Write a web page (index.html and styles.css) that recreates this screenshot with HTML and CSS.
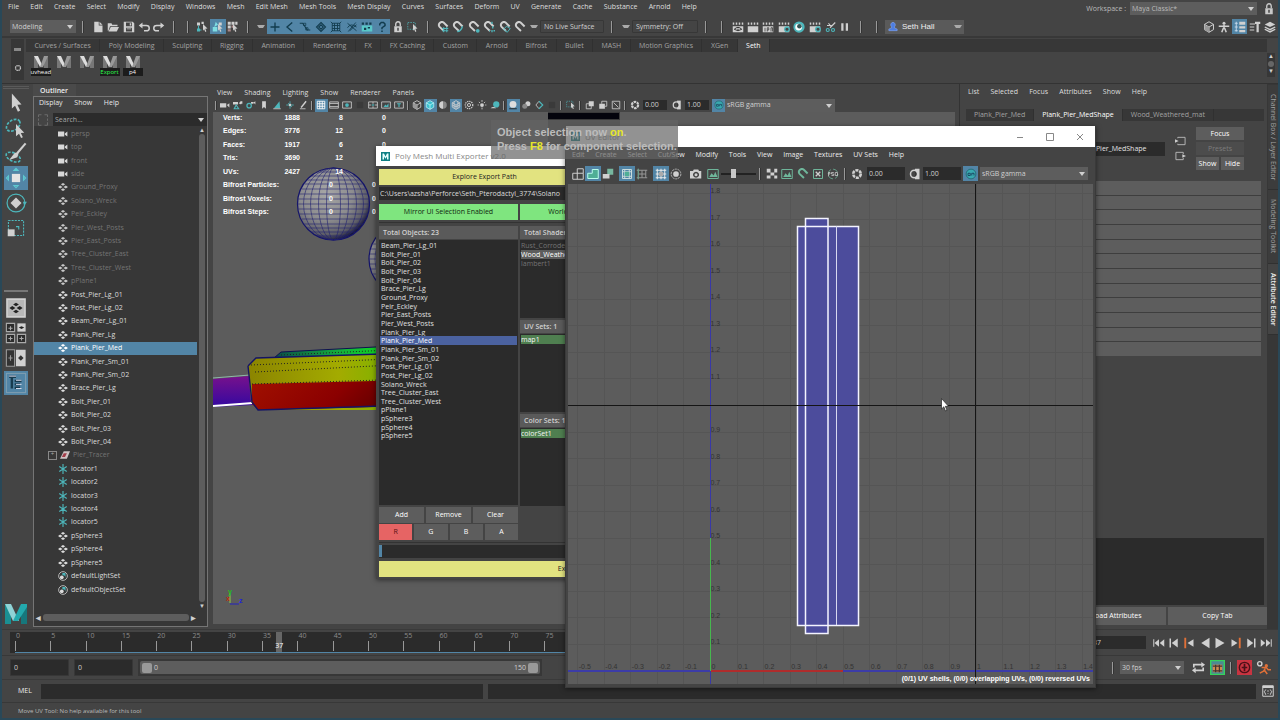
FILE: index.html
```html
<!DOCTYPE html>
<html lang="en">
<head>
    <meta charset="UTF-8">
    <meta name="viewport" content="width=device-width, initial-scale=1.0">
    <title>Maya</title>
    <link rel="stylesheet" href="styles.css">
</head>

<body>
    <div class="app">
        <header class="topbar">
            <nav class="menu main-menu" data-menu="File,Edit,Create,Select,Modify,Display,Windows,Mesh,Edit Mesh,Mesh Tools,Mesh Display,Curves,Surfaces,Deform,UV,Generate,Cache,Substance,Arnold,Help"></nav>
            <div class="workspace">
                <label for="workspace">Workspace :</label>
                <span class="drop"><select id="workspace"><option>Maya Classic*</option></select></span>
                <div class="tools" data-icons="lock"></div>
            </div>
        </header>

        <div class="status">
            <span class="grip"></span>
            <span class="drop mode"><select aria-label="Menu set"><option>Modeling</option></select></span>
            <span class="sep"></span>
            <div class="tools tools-5" data-icons="new open save undo redo"></div>
            <span class="sep"></span>
            <span class="sep"></span>
            <div class="tools tools-3" data-icons="hier object* comp"></div>
            <span class="sep"></span>
            <span class="tri"></span>
            <div class="tools tools-8" data-icons="plus* angle* curve* diamond* lattice* fx* clap* quest*"></div>
            <div class="tools tools-2" data-icons="lock marquee"></div>
            <span class="sep"></span>
            <div class="tools tools-6" data-icons="maggrid magcurve magpoint magcenter magplane magnet"></div>
            <span class="tri"></span>
            <input class="field live" aria-label="Live surface" value="No Live Surface">
            <div class="status-right">
                <span class="sep"></span>
                <span class="tri"></span>
                <input class="field sym" aria-label="Symmetry" value="Symmetry: Off">
                <span class="sep"></span>
                <span class="sep"></span>
                <div class="tools tools-8" data-icons="clapeye clapper clapipr clapset ball clapset cut pause"></div>
                <span class="sep"></span>
                <span class="sep"></span>
                <button class="user"><svg viewBox="0 0 12 12"><path d="M6 1a3 3 0 0 1 2 5v2l3 1v2H1V9l3-1V6a3 3 0 0 1 2-5z" fill="#4d7de0" stroke="#8eb0ff" stroke-width=".6"/></svg>Seth Hall<span class="tri"></span></button>
            </div>
            <div class="tools tools-5 panels" data-icons="cube man channel* hammer layers"></div>
        </div>

        <div class="shelf">
            <span class="grip"></span>
            <div class="shelf-side"><i></i><svg viewBox="0 0 16 16"><circle cx="8" cy="8" r="5" fill="none" stroke="#c4c4c4" stroke-width="2.5" stroke-dasharray="3 .9"/></svg></div>
            <div class="shelf-main">
                <div class="shelf-tabs" id="shelf-tabs"></div>
                <div class="shelf-items" id="shelf-items"></div>
            </div>
            <div class="shelf-scroll"><b>▲</b><i></i><b>▼</b></div>
        </div>

        <main class="main">
            <aside class="toolbox">
                <div class="handle"></div>
                <div class="tools big" data-icons="arrow lasso paint move* rotate scale"></div>
                <hr>
                <div class="tools big" data-icons="single four two tree*"></div>
                <svg class="logo" viewBox="0 0 22 20"><path d="M0 0h6v20H0z" fill="#1a8f93"/><path d="M16 0h6v20h-6z" fill="#16777c"/><path d="M0 0h6l8 17H8z" fill="#8fd3d6"/><path d="M22 0h-6L8 17h5l9-14z" fill="#23a9ad"/></svg>
            </aside>

            <section class="outliner">
                <h2 class="out-tab">Outliner</h2>
                <div class="out-box">
                    <nav class="menu out-menu" data-menu="Display,Show,Help"></nav>
                    <div class="out-search">
                        <svg viewBox="0 0 16 16"><path d="M2 4V1h4M10 1h4v3M14 11v4h-4M6 15H2v-4M2 6v3M14 6v3" fill="none" stroke="#777"/></svg>
                        <span class="drop"><input type="text" aria-label="Search outliner" placeholder="Search..."></span>
                    </div>
                    <div class="out-body">
                        <ul id="outliner"></ul>
                        <div class="vscroll"><b>▲</b><i></i><b>▼</b></div>
                    </div>
                    <div class="hscroll"><b>◀</b><i></i><b>▶</b></div>
                </div>
            </section>

            <section class="viewport">
                <nav class="menu view-menu" data-menu="View,Shading,Lighting,Show,Renderer,Panels"></nav>
                <div class="view-tools">
                    <span class="sep"></span>
                    <div class="tools tools-7" data-icons="cam camlock camset bookmark leaf pan pencil"></div>
                    <span class="sep"></span>
                    <div class="tools tools-7" data-icons="grid* film gate dim safe region text"></div>
                    <span class="sep"></span>
                    <div class="tools tools-7" data-icons="cube cubeteal* half cubewire* checker light shadow"></div>
                    <span class="sep"></span>
                    <div class="tools tools-4" data-icons="ao* blur aa dim"></div>
                    <span class="sep"></span>
                    <div class="tools" data-icons="marquee"></div>
                    <span class="sep"></span>
                    <div class="tools tools-3" data-icons="copy copy2 nobox"></div>
                    <span class="sep"></span>
                    <div class="tools" data-icons="iris"></div>
                    <input class="num" aria-label="Exposure" value="0.00">
                    <div class="tools" data-icons="contrast"></div>
                    <input class="num" aria-label="Gamma" value="1.00">
                    <div class="tools" data-icons="cm*"></div>
                    <span class="drop gamma"><select aria-label="View transform"><option>sRGB gamma</option></select></span>
                </div>
                <div class="scene">
                    <svg class="scene-art" viewBox="0 0 742 511" preserveAspectRatio="xMinYMin slice">
                        <defs>
                            <radialGradient id="ball" cx=".4" cy=".35" r=".68"><stop offset="0" stop-color="#a6a6a6"/><stop offset=".55" stop-color="#8c8c8e"/><stop offset=".85" stop-color="#5c5c66"/><stop offset="1" stop-color="#0c0c35"/></radialGradient>
                            <linearGradient id="top" x1="0" x2="1"><stop offset="0" stop-color="#8b8400"/><stop offset=".55" stop-color="#a3ab00"/><stop offset="1" stop-color="#6bb600"/></linearGradient>
                            <linearGradient id="front" x1="0" x2="1" y2=".2"><stop offset="0" stop-color="#a01000"/><stop offset=".6" stop-color="#8b0000"/><stop offset="1" stop-color="#5c0000"/></linearGradient>
                            <linearGradient id="far" x1="0" x2="1"><stop offset="0" stop-color="#0a4a4a"/><stop offset=".5" stop-color="#14b43c"/><stop offset="1" stop-color="#0af00a"/></linearGradient>
                            <linearGradient id="side" x1="0" x2="0" y2="1"><stop offset="0" stop-color="#77118c"/><stop offset="1" stop-color="#3408a0"/></linearGradient>
                            <g id="sphere">
                                <circle r="36" fill="url(#ball)" stroke="#14146a" stroke-width="1.2"/>
                                <g fill="none" stroke="#22226e" stroke-width=".6">
                                    <ellipse rx="7" ry="36"/><ellipse rx="15" ry="36"/><ellipse rx="23" ry="36"/><ellipse rx="30" ry="36"/>
                                    <path d="M-17 -32H17M-22 -28H22M-26 -24H26M-29 -20H29M-32 -15H32M-34 -10H34M-35 -5H35M-36 0H36M-35 5H35M-34 10H34M-32 15H32M-30 20H30M-27 24H27M-22 28H22M-16 32H16"/>
                                </g>
                            </g>
                        </defs>
                        <path d="M335 0h72v36h-72z" fill="#3a3a3a"/>
                        <path d="M335 1h71v6h-71z" fill="#04040c"/>
                        <use href="#sphere" x="120.500" y="92"/>
                        <use href="#sphere" x="192" y="147"/>
                        <path d="M0 267l36-3 4 29-40 2z" fill="url(#side)"/>
                        <path d="M0 266l37-3" stroke="#8fb8a8"/><path d="M0 294l40-3" stroke="#fff" stroke-width="2"/>
                        <path d="M61 246l7-6 132-7v18l-140 4z" fill="url(#far)" stroke="#101050"/>
                        <path d="M35 254l8-8 157-5v57l-155 0-7-8z" fill="url(#top)"/>
                        <path d="M39 272l161-4v26l-155 4-6-6z" fill="url(#front)"/>
                        <path d="M35 254l8-8 157-5M35 254l4 36 6 8 155-5" fill="none" stroke="#141464" stroke-width="1.400"/>
                        <path d="M38 253l162-7M42 260l158-8M39 272l161-5M68 243l132-6" fill="none" stroke="#222" stroke-dasharray="1 2"/>
                        <path d="M17 491v-10" stroke="#8ad040"/><path d="M17 492h9" stroke="#2222c0"/>
                        <text x="15" y="482" fill="#20c020" class="axis">y</text><text x="26" y="491" fill="#2222e0" class="axis">z</text><text x="13" y="489" fill="#c03010" class="axis">x</text>
                    </svg>
                    <div class="hud">
                        <div><b>Verts:</b><b>1888</b><b>8</b><b>0</b></div>
                        <div><b>Edges:</b><b>3776</b><b>12</b><b>0</b></div>
                        <div><b>Faces:</b><b>1917</b><b>6</b><b>0</b></div>
                        <div><b>Tris:</b><b>3690</b><b>12</b><b>0</b></div>
                        <div><b>UVs:</b><b>2427</b><b>14</b><b>0</b></div>
                        <div class="bifrost"><b>Bifrost Particles:</b><b>0</b><b>0</b></div>
                        <div class="bifrost"><b>Bifrost Voxels:</b><b>0</b><b>0</b></div>
                        <div class="bifrost"><b>Bifrost Steps:</b><b>0</b><b>0</b></div>
                    </div>
                </div>
            </section>

            <section class="attrs">
                <nav class="menu attr-menu" data-menu="List,Selected,Focus,Attributes,Show,Help"></nav>
                <div class="attr-tabs">
                    <button>Plank_Pier_Med</button>
                    <button class="on">Plank_Pier_MedShape</button>
                    <button>Wood_Weathered_mat</button>
                </div>
                <div class="attr-head">
                    <label for="mesh-name">mesh:</label>
                    <input id="mesh-name" value="Plank_Pier_MedShape">
                    <div class="attr-io">
                        <svg viewBox="0 0 12 10"><path d="M3 2V1h8v8H3V8" fill="none" stroke="#bbb"/><path d="M0 3l4 2-4 2z" fill="#ccc"/></svg>
                        <svg viewBox="0 0 12 10"><path d="M9 3V1H1v8h8V7" fill="none" stroke="#bbb"/><path d="M8 3l4 2-4 2z" fill="#ccc"/></svg>
                    </div>
                    <div class="attr-btns">
                        <button class="wide">Focus</button>
                        <button class="wide" disabled>Presets</button>
                        <button>Show</button>
                        <button>Hide</button>
                    </div>
                </div>
                <div class="rolls" id="rolls"></div>
                <textarea class="notes" aria-label="Notes"></textarea>
                <div class="attr-foot">
                    <button>Select</button>
                    <button>Load Attributes</button>
                    <button>Copy Tab</button>
                </div>
            </section>

            <nav class="side-tabs">
                <button>Channel Box / Layer Editor</button>
                <button>Modeling Toolkit</button>
                <button class="on">Attribute Editor</button>
            </nav>
        </main>

        <div class="timeline">
            <span class="grip"></span>
            <div class="time-bed">
                <div class="ticks" id="ticks"></div>
            </div>
            <input class="frame" aria-label="Current frame" value="37">
            <div class="tools tools-8p" data-icons="first prev keyprev back play keynext next last"></div>
        </div>

        <div class="range">
            <span class="grip"></span>
            <input class="field" aria-label="Animation start" value="0">
            <input class="field" aria-label="Playback start" value="0">
            <div class="range-bed">
                <div class="range-bar"><i></i><span>0</span><span class="end">150</span><i></i></div>
            </div>
            <span class="grow"></span>
            <span class="sep"></span>
            <span class="drop fps"><select aria-label="Frame rate"><option>30 fps</option></select></span>
            <div class="range-tools">
                <div class="tools" data-icons="loop"></div>
                <div class="tools" data-icons="cache"></div>
                <span class="sep"></span>
                <div class="tools" data-icons="autokey"></div>
                <div class="tools" data-icons="runner"></div>
            </div>
        </div>

        <div class="command">
            <span class="grip"></span>
            <label for="mel">MEL</label>
            <input class="mel" id="mel">
            <output class="result"></output>
            <div class="tools" data-icons="script"></div>
        </div>
        <footer class="help"><span class="grip"></span>Move UV Tool: No help available for this tool</footer>
    </div>

    <section class="exporter">
        <header class="exp-title">
            <svg viewBox="0 0 12 12"><path d="M0 0h12v12H0z" fill="#0e7f84"/><path d="M2 10V2h2l2 4 2-4h2v8H8V6L6 9 4 6v4z" fill="#e8ffff"/></svg>
            Poly Mesh Multi Exporter v2.0
        </header>
        <div class="exp-body">
            <button class="yellow explore">Explore Export Path</button>
            <input class="path" aria-label="Export path" value="C:\Users\azsha\Perforce\Seth_Pterodactyl_3774\Solano">
            <div class="exp-modes">
                <button>Mirror UI Selection Enabled</button>
                <button>World Origin</button>
            </div>
            <div class="exp-cols">
                <div class="exp-left">
                    <h3>Total Objects: 23</h3>
                    <div class="list tall"><ul id="objects"></ul></div>
                    <div class="row"><button>Add</button><button>Remove</button><button>Clear</button></div>
                    <div class="row"><button class="red">R</button><button>G</button><button>B</button><button>A</button></div>
                </div>
                <div class="exp-right">
                    <h3>Total Shaders: 3</h3>
                    <div class="list"><p class="dim">Rust_Corroded</p><p class="shade">Wood_Weathered_mat</p><p class="dim">lambert1</p></div>
                    <h3>UV Sets: 1</h3>
                    <div class="list"><p class="set">map1</p></div>
                    <h3>Color Sets: 1</h3>
                    <div class="list"><p class="set">colorSet1</p></div>
                </div>
            </div>
            <div class="progress"><i></i></div>
            <button class="yellow">Export</button>
        </div>
    </section>

    <section class="uv">
        <header class="uv-title">
            <span class="uv-name"><svg viewBox="0 0 12 12"><path d="M0 0h12v12H0z" fill="#0e7f84"/><path d="M2 10V2h2l2 4 2-4h2v8H8V6L6 9 4 6v4z" fill="#e8ffff"/></svg>UV Editor</span>
            <button aria-label="Minimize"><svg viewBox="0 0 8 8"><path d="M1 4.500h6"/></svg></button>
            <button aria-label="Maximize"><svg viewBox="0 0 8 8"><path d="M.5 .5h7v7h-7z"/></svg></button>
            <button aria-label="Close"><svg viewBox="0 0 8 8"><path d="M1 1l6 6M7 1L1 7"/></svg></button>
        </header>
        <nav class="menu uv-menu" data-menu="Edit,Create,Select,Cut/Sew,Modify,Tools,View,Image,Textures,UV Sets,Help"></nav>
        <div class="uv-tools">
            <div class="tools tools-3" data-icons="uvgrid uvshell* uvsolid"></div>
            <div class="tools tools-2" data-icons="uvborder* uvcross"></div>
            <div class="tools tools-2" data-icons="pix* isolate"></div>
            <div class="tools photo" data-icons="camera picture"></div>
            <input type="range" class="dimmer" aria-label="Image dim" min="0" max="100" value="32">
            <span class="sep"></span>
            <div class="tools tools-5" data-icons="checks picture maguv xbox psd"></div>
            <span class="sep"></span>
            <div class="tools" data-icons="iris"></div>
            <input class="num" aria-label="UV exposure" value="0.00">
            <div class="tools" data-icons="contrast"></div>
            <input class="num" aria-label="UV gamma" value="1.00">
            <div class="tools" data-icons="cm*"></div>
            <span class="drop gamma"><select aria-label="UV view transform"><option>sRGB gamma</option></select></span>
        </div>
        <svg class="uv-canvas" id="uv-canvas" viewBox="0 0 525 500"></svg>
    </section>

    <div class="toast">Object selection now <b>on</b>.<br>Press <b>F8</b> for component selection.</div>

    <svg class="cursor" viewBox="0 0 8 14"><path d="M.5 .5v10.500l2.300-2.200 1.700 4.200 1.500-.7-1.700-4h3.200z" fill="#fff" stroke="#222" stroke-width=".7"/></svg>

    <script>
        const T = '#4db6bb'
        const clap = '<path d="M1 7h14v8H1z"/><path d="M1 2h2v3H1zM5 2h2v3H5zM9 2h2v3H9zM13 2h2v3h-2z"/>'
        const magShape = color => `<path d="M10 13L3.500 8.500A4 4 0 0 1 8 2l6 4.500" transform="rotate(8 8 8)" fill="none" stroke="${color}" stroke-width="2.600"/>`
        const mag = magShape('currentColor')
        const pick = '<path d="M8 4l6 6-3 .3 1.500 3.500-1.500.7L9.500 11 8 13z"/>'
        const cubeLine = '<path d="M8 1l6 3.500v7L8 15l-6-3.500v-7zM2 4.500L8 8l6-3.500M8 8v7" fill="none" stroke="currentColor" stroke-width="1.300"/>'
        const mesh = '<path d="M8 1.500l3.500 2.200L8 6 4.500 3.700zM8 10l3.500 2.300L8 14.500l-3.500-2.200zM3.500 5.700L7.300 8l-3.800 2.300L0 8zM12.500 5.700L16 8l-3.500 2.300L8.700 8z"/>'
        const line = (d, c = 'currentColor', w = 1.3) => `<path d="${d}" fill="none" stroke="${c}" stroke-width="${w}"/>`
        const fill = (d, c = 'currentColor') => `<path d="${d}" fill="${c}"/>`

        const icons = {
            new: fill('M3 1h6v5h5v9H3z') + fill('M10 1l4 4h-4z'),
            open: fill('M1 3h5l1 2h7v2H4L2 13H1z') + fill('M5 8h11l-3 6H2z'),
            save: '<path fill-rule="evenodd" d="M1 1h12l2 2v12H1zM4 2v5h8V2zM4 9v5h8V9z"/>' + fill('M9 3h2v3H9zM5 10h6v1H5z'),
            undo: line('M3 6h8q4 0 4 3.500T11 13H8', 'currentColor', 2) + fill('M1 6l5-4v8z'),
            redo: line('M13 6H5Q1 6 1 9.500T5 13h3', 'currentColor', 2) + fill('M15 6l-5-4v8z'),
            hier: fill('M0 2h4v4H0zM6 1h3v3H6z') + line('M2 6v6h4', T) + fill('M0 10h4v4H0z', T) + pick,
            object: fill('M1 8h6v6H1zM5 1l3 4-5 3z', '#7fdde2') + fill('M9 2h4v4H9z') + pick,
            comp: fill('M1 1h4v4H1zM6 1h4v4H6zM1 6h4v4H1zM11 1h3v4h-3z') + fill('M6 6h2v3H6zM1 11h4v3H1z', '#a88') + pick,
            plus: line('M8 2v12M2 8h12', '#123c4e', 1.8),
            angle: line('M11 2L4 8l7 6', '#123c4e', 1.8),
            curve: line('M1 3h4l6 9h4', '#123c4e', 1.5) + line('M6 3h3v3H6zM9 9h3v3H9z', '#123c4e', 1),
            diamond: line('M8 2l6 6-6 6-6-6zM5 8l3-3 3 3-3 3z', '#123c4e', 1.5),
            lattice: line('M3 3h10v10H3zM6 3v10M10 3v10M3 6h10M3 10h10M1 1l3 3M15 1l-3 3M1 15l3-3M15 15l-3-3', '#123c4e', 1.2),
            fx: line('M2 3l12 10M13 2L3 14M2 9q4-7 12-1M5 13q6-6 9-8', '#123c4e', 1.2),
            clap: fill('M1 6h14v8H1z', '#58c8c8') + fill('M1 2h3v3H1zM6 2h3v3H6zM11 2h3v3h-3zM4 9h3v3H4zM9 8h3v2H9z', '#123c4e'),
            quest: line('M5 6V4l2-2h3l2 2v2L8 9v2M8 12.500v2', '#123c4e', 2),
            lock: fill('M3 7h10v8H3z') + line('M5 7V4a3 3 0 0 1 6 0v3', 'currentColor', 1.8) + fill('M7 9h2v4H7z', '#444'),
            marquee: '<path d="M1 2h10v9H1z" fill="none" stroke="#4db6bb" stroke-dasharray="2 1.500"/>' + pick,
            magnet: mag,
            maguv: magShape('#6fb79b'),
            maggrid: mag + line('M9 8v7M13 8v7M7 10h8M7 13h8', T),
            magcurve: mag + line('M7 14q5 0 7-7', T, 1.8),
            magpoint: mag + '<circle cx="13" cy="13" r="2.500" fill="#4db6bb"/>',
            magcenter: mag + line('M12 1v3M12 12v3M8 13h1M14 13h2M13 7v3', T, 1.8),
            magplane: mag + line('M6 11l4-4 5 3-4 5z', T),
            clapper: clap,
            clapeye: clap + line('M3 11q5-5 10 0q-5 4-10 0M7 11h2', '#333'),
            clapipr: clap + line('M4 9v5M7 14V9h2v3H7M12 14V9h2v5', '#333', 1),
            clapset: clap + '<circle cx="12" cy="11" r="3" fill="#444" stroke="#4db6bb" stroke-width="1.800"/>',
            ball: '<circle cx="8" cy="8" r="7.500" fill="#4db6bb"/><circle cx="7.500" cy="8" r="4.500" fill="#fff"/><circle cx="8.500" cy="7" r="3" fill="#355"/>',
            cut: line('M15 2L8 9M4 6h6M6 3l4 5', 'currentColor', 1.5) + '<circle cx="5" cy="12" r="2" fill="none" stroke="#4db6bb" stroke-width="1.500"/><circle cx="12" cy="12" r="2" fill="none" stroke="#4db6bb" stroke-width="1.500"/>',
            pause: fill('M3 3h3v10H3zM9 3h3v10H9z'),
            cube: cubeLine + fill('M2 5l6 3v7l-6-3z', '#999'),
            man: '<circle cx="8" cy="3" r="2"/>' + line('M1 7h14M8 5v5M5 15l2-5h2l2 5', 'currentColor', 2),
            channel: fill('M7 1h8v4H7zM7 7h8v3H7zM7 12h8v3H7z') + line('M1 3h4M1 8h4M1 13h4M3 1v13', '#cde', 1.2),
            hammer: line('M1 4h7M1 8h6M1 12h6', 'currentColor', 1.5) + fill('M8 1h7v3h-2v11h-3V4H8z'),
            layers: fill('M8 1l7 3.500L8 8 1 4.500z') + line('M1 8l7 3.500L15 8M1 11l7 3.500 7-3.500', 'currentColor', 1.8),
            arrow: fill('M5 1l7 8-3 .3 2 4.200-1.600.8L7.300 10 5 12z'),
            lasso: '<ellipse cx="6" cy="6" rx="5.500" ry="3.600" transform="rotate(-35 6 6)" fill="none" stroke="#4db6bb" stroke-width="1.200" stroke-dasharray="2 1"/>' + fill('M8 5l6 6.500-2.500.2 1.500 3-1.300.6-1.500-3.200L8 14z'),
            paint: '<ellipse cx="6" cy="11" rx="5.500" ry="3" transform="rotate(25 6 11)" fill="none" stroke="#4db6bb" stroke-width="1.200" stroke-dasharray="2 1"/>' + line('M15 1L9 8', 'currentColor', 1.5) + fill('M10 7l-1 4-6 2 4-5z'),
            move: fill('M5 5h6v6H5z', '#e4e4e4') + line('M6.500 2.500L8 1l1.500 1.500zM6.500 13.500L8 15l1.500-1.500zM2.500 6.500L1 8l1.500 1.500zM13.500 6.500L15 8l-1.500 1.500z', '#5fc9d0', .8),
            rotate: fill('M8 4l4 4-4 4-4-4z') + '<circle cx="8" cy="8" r="6.500" fill="none" stroke="#4db6bb" stroke-width=".9"/>' + fill('M13 7h3l-2 3z', T),
            scale: '<path d="M2.500 2.500h11v11h-11z" fill="none" stroke="#4db6bb" stroke-width=".8" stroke-dasharray="1.500 .8"/>' + fill('M2 9h5v5H2z') + line('M8 7h2v2', T, .8),
            single: fill('M2 2h12v12H2z', '#b8b8b8') + line('M1.500 1.500h13v13h-13z') + '<g fill="#222" transform="translate(3.200 3.200) scale(.6)">' + mesh + '</g>',
            four: fill('M1 1h6v6H1zM1 9h6v6H1zM9 9h6v6H9z', '#2c2c2c') + fill('M9 1h6v6H9z') + line('M1 1h6v6H1zM1 9h6v6H1zM9 9h6v6H9zM4 3v3M2.500 4.500h3M4 10.500v3M2.500 12h3M12 10.500v3M10.500 12h3', '#aaa', .8) + fill('M12 3l2 1-2 1-2-1z', '#222'),
            two: fill('M1 2h6v12H1z', '#333') + line('M1 2h6v12H1zM4 6v4M2.500 8h3', '#999', .8) + fill('M8 2h7v12H8z') + fill('M11.500 6l2 2-2 2-2-2z', '#333'),
            tree: line('M1 1h14v14H1z', '#a8b4bc', .4) + line('M3 3.500h5M5 4v8M7 6.500h5M7 9h4M7 11.500h4', '#173b4f', 1.8) + line('M3 3h5M8 6h4M8 9h4M8 12h4', '#dde', .7),
            cam: fill('M0 5h10v7H0zM11 8l4-3v7z'),
            camlock: fill('M0 3h8v4H0zM9 5l4-3v5z') + line('M5 8l4 6H2z', T, 1.8) + fill('M12 2h3v4h-3z'),
            camset: fill('M8 3h4v3H8zM12 4l3-2v5z') + '<circle cx="5" cy="9" r="3.500" fill="none" stroke="#4db6bb" stroke-width="2"/>',
            bookmark: fill('M5 2h6v12l-3-3-3 3z'),
            leaf: fill('M3 13L12 2l1 11z', T) + line('M2 14h12'),
            pan: line('M8 2v12M2 8h12M5 5l6 6', T, 1.3) + '<circle cx="8" cy="8" r="2"/>',
            pencil: line('M3 14h9') + line('M13 2L5 12', 'currentColor', 2.2),
            grid: line('M2 2h12v12H2zM2 6h12M2 10h12M6 2v12M10 2v12', '#fff', 1.4),
            film: line('M1 3h14v10H1zM1 5.500h14M1 10.500h14'),
            gate: line('M1 3h14v10H1z') + '<circle cx="8" cy="8" r="3" fill="#4db6bb"/>',
            dim: fill('M3 3h10v10H3z', '#3a3a3a'),
            safe: line('M1 3h14v10H1zM8 3v3M8 10v3M1 8h4M11 8h4') + fill('M6 7h4v2H6z', T),
            region: line('M1 3h14v10H1z') + fill('M4 11l3-4 2 2 3-4v6z', T),
            text: line('M1 3h14v10H1z') + line('M5 6h6M8 6v5', T, 1.8),
            cubeteal: fill('M8 1l6 3.500v7L8 15l-6-3.500v-7z', '#3cc0d0') + line('M8 1l6 3.500v7L8 15l-6-3.500v-7zM2 4.500L8 8l6-3.500M8 8v7', '#d8ffff', 1),
            cubewire: cubeLine + line('M5 3v10M11 3v10M2 8l6 3 6-3'),
            half: '<circle cx="8" cy="8" r="6" fill="#888"/>' + fill('M8 2a6 6 0 0 0 0 12z'),
            checker: '<circle cx="8" cy="8" r="6" fill="none" stroke="currentColor" stroke-width="2" stroke-dasharray="2 1.500"/><circle cx="8" cy="8" r="2.500" fill="none" stroke="currentColor" stroke-width="1.500"/>',
            light: '<circle cx="8" cy="8" r="3"/>' + line('M8 0v3M8 12v3M1 8h2M13 8h2M3 3l2 2M13 3l-2 2'),
            shadow: '<circle cx="10" cy="7" r="5" fill="#4db6bb"/>' + fill('M1 13q4-4 9 0z'),
            ao: '<circle cx="8" cy="7" r="5.500" fill="#ddd"/>' + line('M2 14h12', '#222', 1.5),
            blur: '<circle cx="11" cy="6" r="4"/><circle cx="6" cy="10" r="4" fill="#888"/>',
            aa: line('M8 2L3 8l5 6') + line('M8 2l6 6-6 6', T, 1.8),
            copy: line('M2 6h8v8H2z') + fill('M6 2h8v8H6z'),
            copy2: fill('M2 6h9v8H2z') + line('M6 6V2h8v8h-3'),
            nobox: line('M2 2h12v12H2zM4 4l8 8'),
            iris: '<circle cx="8" cy="8" r="5" fill="none" stroke="currentColor" stroke-width="3.500" stroke-dasharray="4 1.200"/>',
            contrast: fill('M8 1h6v14H8z') + '<circle cx="7" cy="8" r="5" fill="none" stroke="currentColor" stroke-width="2"/>' + fill('M8 4q5 4 0 8z', '#333'),
            cm: '<circle cx="8" cy="8" r="6.500" fill="#39a9b0" stroke="#1c6068"/>' + line('M4 7v3h3V7zM9 10V7h3v3', '#124', .9),
            uvgrid: line('M1 7h14v8H1zM7 1h8v6M7 1v14'),
            uvshell: fill('M1 7h6V2h8v12H1z', '#4fae96') + line('M1 7h6V2h8v12H1z', '#bfe'),
            uvsolid: fill('M7 1h8v8H7z', '#77b79f') + fill('M1 8h9v6H1z'),
            uvborder: line('M2 2h12v12H2zM5 2v12M11 2v12M2 5h12M2 11h12', '#cdd') + fill('M5 5h6v6H5z', '#4fae96'),
            uvcross: line('M3 1v14M13 3v10M1 3h14M1 13h14M3 8h10M8 3v10', '#999') + line('M3 1v14', '#5a8', 1),
            pix: line('M1 3h14M1 8h14M1 13h14M3 1v14M8 1v14M13 1v14', '#eee') + fill('M5 5h6v6H5z', '#aaa'),
            isolate: '<circle cx="8" cy="8" r="3.800"/><circle cx="8" cy="8" r="6.500" fill="none" stroke="currentColor" stroke-dasharray="3 1"/>',
            camera: '<path fill-rule="evenodd" d="M0 4h4l1-2h6l1 2h3v10H0zM8 5a4 4 0 1 0 .1 0z"/><circle cx="8" cy="9" r="2"/>',
            picture: line('M1 2h14v12H1z', '#6fb79b') + fill('M3 12l3-5 3 3 2-5 3 7z', '#6fb79b'),
            checks: fill('M1 1h5v5H1zM11 1h4v5h-4zM6 6h5v4H6zM1 10h5v4H1zM11 10h4v4h-4z'),
            xbox: line('M2 2h12v12H2z', '#6fb79b') + line('M5 5l6 6M11 5l-6 6', 'currentColor', 1.8),
            psd: '<circle cx="8" cy="8" r="6.500" fill="none" stroke="#6fb79b" stroke-dasharray="7 3"/>' + line('M2 11V6h2v2H2M9 6H6v2h3v2H6M11 6v4h3V6z', 'currentColor', 1),
            first: line('M1 3v10') + fill('M8 3v10L2 8zM15 3v10L9 8z'),
            last: line('M15 3v10') + fill('M8 3v10l6-5zM1 3v10l6-5z'),
            prev: line('M3 2v12', 'currentColor', 2) + fill('M13 2v12L5 8z'),
            next: line('M13 2v12', 'currentColor', 2) + fill('M3 2v12l8-6z'),
            keyprev: line('M3 1v14', '#e07038', 2.5) + fill('M14 3v10L6 8z'),
            keynext: line('M13 1v14', '#e07038', 2.5) + fill('M2 3v10l8-5z'),
            back: fill('M14 1v14L3 8z'),
            play: fill('M2 1v14l12-7z'),
            loop: line('M3 8V5h9M13 8v3H4', 'currentColor', 1.8) + fill('M11 2l4 3-4 3zM5 8v6l-4-3z'),
            cache: fill('M0 0h16v16H0z', '#4c8a93') + line('M.7 .7h14.600v14.600H.7z', '#36d35c', 1.5) + fill('M3 5h10v8H3z', '#d08a50') + line('M3 6.500h10M3 11.500h10M6 5v8M10 5v8', '#433'),
            autokey: fill('M0 0h16v16H0z', '#c93441') + '<circle cx="8" cy="8" r="5.500" fill="none" stroke="#4c1118" stroke-width="1.500"/>' + line('M8 4v8M5 8h6', '#4c1118', 1.8),
            runner: '<circle cx="11" cy="6" r="1.800" fill="#e07038"/>' + line('M6 8l5 0 2 2.500h3M10 9l-2 3-4 2M9 11l3 4', '#e07038', 1.6) + '<circle cx="4" cy="4" r="2.300" fill="none" stroke="currentColor" stroke-width="1.500"/>',
            script: line('M1 1h14v14H1z') + fill('M1 1h14v3H1z') + line('M5 6q-1 2-2 3 1 1 2 4M11 6q1 2 2 3-1 1-2 4M8 7v2M8 11v1'),
            camera2: fill('M0 4h10v8H0zM11 7l4-3v8l-4-3z', '#d8d8d8'),
            mesh: mesh,
            group: fill('M6 2h10l-5 12H0z', '#cfc4c4') + fill('M6 5h5l-3 6H3z', '#a33c48'),
            locator: line('M8 0v16M2 4l12 8M14 4L2 12', T, 1.8),
            set: '<circle cx="8" cy="8" r="7" fill="none" stroke="#bbb" stroke-width="1.500"/><circle cx="6" cy="10" r="3"/>' + fill('M7 3h5v9q0-6-5-5z', T)
        }
        const svg = name => `<svg viewBox="0 0 16 16" fill="currentColor">${icons[name]}</svg>`

        document.querySelectorAll('[data-menu]').forEach(nav => {
            nav.innerHTML = nav.dataset.menu.split(',').map(item => `<button>${item}</button>`).join('')
        })

        document.querySelectorAll('[data-icons]').forEach(box => {
            box.innerHTML = box.dataset.icons.split(' ').map(item => {
                const name = item.replace('*', '')
                return `<button aria-label="${name}" class="${item.endsWith('*') ? 'tool on' : 'tool'}">${svg(name)}</button>`
            }).join('')
        })

        const tabs = ['Curves / Surfaces', 'Poly Modeling', 'Sculpting', 'Rigging', 'Animation', 'Rendering', 'FX', 'FX Caching', 'Custom', 'Arnold', 'Bifrost', 'Bullet', 'MASH', 'Motion Graphics', 'XGen', 'Seth']
        document.querySelector('#shelf-tabs').innerHTML = tabs.map(tab => `<button class="${tab === 'Seth' ? 'on' : ''}">${tab}</button>`).join('')

        document.querySelector('#shelf-items').innerHTML = ['uvhead', '', '', 'Export', 'p4'].map(label => `
            <button class="${label === 'Export' ? 'green' : ''}">
                <svg viewBox="0 0 14 12"><path d="M0 0h4v12H0zM10 0h4v12h-4z" fill="#777"/><path d="M0 0h4l5 11H6z" fill="#ddd"/><path d="M14 0h-4L6 11h3z" fill="#999"/></svg>
                ${label ? `<span>${label}</span>` : ''}
            </button>`).join('')

        // kind, name, hidden in the scene
        const nodes = [
            ...['persp', 'top', 'front', 'side'].map(n => ['camera2', n, 1]),
            ...['Ground_Proxy', 'Solano_Wreck', 'Peir_Eckley', 'Pier_West_Posts', 'Pier_East_Posts', 'Tree_Cluster_East', 'Tree_Cluster_West', 'pPlane1'].map(n => ['mesh', n, 1]),
            ...['Post_Pier_Lg_01', 'Post_Pier_Lg_02', 'Beam_Pier_Lg_01', 'Plank_Pier_Lg', 'Plank_Pier_Med', 'Plank_Pier_Sm_01', 'Plank_Pier_Sm_02', 'Brace_Pier_Lg', 'Bolt_Pier_01', 'Bolt_Pier_02', 'Bolt_Pier_03', 'Bolt_Pier_04'].map(n => ['mesh', n]),
            ['group', 'Pier_Tracer', 1],
            ...[1, 2, 3, 4, 5].map(n => ['locator', 'locator' + n]),
            ...[3, 4, 5].map(n => ['mesh', 'pSphere' + n]),
            ['set', 'defaultLightSet'],
            ['set', 'defaultObjectSet']
        ]
        document.querySelector('#outliner').innerHTML = nodes.map(([kind, name, off]) => `
            <li class="${off ? 'off' : ''} ${name === 'Plank_Pier_Med' ? 'on' : ''} ${kind}">${svg(kind)}${name}</li>`).join('')

        const objects = ['Beam_Pier_Lg_01', 'Bolt_Pier_01', 'Bolt_Pier_02', 'Bolt_Pier_03', 'Bolt_Pier_04', 'Brace_Pier_Lg', 'Ground_Proxy', 'Peir_Eckley', 'Pier_East_Posts', 'Pier_West_Posts', 'Plank_Pier_Lg', 'Plank_Pier_Med', 'Plank_Pier_Sm_01', 'Plank_Pier_Sm_02', 'Post_Pier_Lg_01', 'Post_Pier_Lg_02', 'Solano_Wreck', 'Tree_Cluster_East', 'Tree_Cluster_West', 'pPlane1', 'pSphere3', 'pSphere4', 'pSphere5']
        document.querySelector('#objects').innerHTML = objects.map(name => `<li class="${name === 'Plank_Pier_Med' ? 'on' : ''}">${name}</li>`).join('')

        document.querySelector('#rolls').innerHTML = '<div></div>'.repeat(12)

        let ticks = ''
        for (let f = 0; f < 150; f += 5) ticks += `<span>${f}</span>`
        document.querySelector('#ticks').innerHTML = ticks + `<b style="left: ${37 / 150 * 100}%">37</b>`

        // uv space: 265.5px per unit, origin at (142.5, 487)
        const unit = 265.5, ox = 142.5, oy = 487
        let uv = ''
        for (let i = -5; i <= 14; i++) {
            const x = ox + i / 10 * unit
            uv += `<path d="M${x} 0V500" stroke="#555"/><text x="${x + 1}" y="485">${i / 10}</text>`
        }
        for (let i = 1; i <= 18; i++) {
            const y = oy - i / 10 * unit
            uv += `<path d="M0 ${y}H525" stroke="#555"/>`
            if (i !== 10) uv += `<text x="${ox}" y="${y}">${i / 10}</text>`
        }
        uv += `
            <path d="M0 ${oy}H${ox}M275 ${oy}H525" stroke="#3c3ca8" stroke-width="2"/>
            <path d="M${ox} 0V354M${ox} ${oy}V500" stroke="#3838a8"/>
            <path d="M${ox} ${oy}H275" stroke="#b02c2c" stroke-width="2"/>
            <path d="M${ox} 354V${oy}" stroke="#46b84e"/>
            <path d="M229.500 42.500h61v399h-61zM237.500 35h22v414h-22z" fill="#4c4c9c"/>
            <path class="shell" d="M229.500 42.500h61v399h-61zM237.500 34.500h22.500v415h-22.500z"/>
            <path d="M268.500 42v399" stroke="#d8d8f0"/>
            <path d="M407.500 0V500M0 221.500H525" stroke="#151515"/>
            <text class="stat" x="522" y="497" text-anchor="end">(0/1) UV shells, (0/0) overlapping UVs, (0/0) reversed UVs</text>`
        document.querySelector('#uv-canvas').innerHTML = uv
    </script>
</body>

</html>
```

FILE: styles.css
```css
* {
    box-sizing: border-box;
    margin: 0;
    padding: 0;
}

body {
    position: relative;
    height: 100vh;
    overflow: hidden;
    background: #444;
    color: #d0d0d0;
    font: 7px/10px "Open Sans", "Noto Sans", sans-serif;
}

button,
input,
select,
textarea {
    border: none;
    outline: none;
    background: none;
    color: inherit;
    font: inherit;
    appearance: none;
    min-width: 0;
    white-space: nowrap;
}

ul {
    list-style: none;
}

svg {
    display: block;
}

.app {
    display: flex;
    flex-direction: column;
    height: 100vh;
    border: solid #294858;
    border-width: 0 2px 2px;
}

/* shared bits */
.menu {
    display: flex;
    justify-content: space-between;
    color: #dedede;
}

.tools {
    display: flex;
    flex: none;
    width: 15px;
}

.tools-2 { width: 31px; }
.tools-3 { width: 46px; }
.tools-5 { width: 77px; }
.tools-6 { width: 93px; }
.tools-8 { width: 123px; }

.tool {
    flex: 1;
    display: flex;
    align-items: center;
    justify-content: center;
    height: 15px;
}

.tool svg {
    width: 12px;
    height: 12px;
}

.tool.on {
    background: #5285a6;
}

.sep {
    flex: none;
    width: 2px;
    height: 12px;
    margin: 0 6px;
    background: #999;
    border-right: 1px solid #333;
}

.grip {
    flex: none;
    width: 4px;
    height: 80%;
    margin: 0 3px 0 1px;
    background: radial-gradient(circle, #777 35%, transparent 40%) 0 0 / 2px 2px;
}

.tri {
    flex: none;
    width: 12px;
}

.tri::before {
    content: "";
    display: block;
    width: 4px;
    margin: auto;
    border: solid transparent;
    border-width: 3px 2px 0;
    border-top-color: #aaa;
}

.drop {
    position: relative;
    display: block;
    background: #5d5d5d;
}

.drop select,
.drop input {
    display: block;
    width: 100%;
    height: 13px;
    padding: 0 2px;
}

.drop::after {
    content: "";
    position: absolute;
    right: 3px;
    top: 5px;
    border: solid transparent;
    border-width: 4px 3px 0;
    border-top-color: #d0d0d0;
}

.field {
    height: 13px;
    padding: 0 3px;
    border: 1px solid #373737;
    border-radius: 1px;
}

.num {
    width: 24px;
    height: 10px;
    padding: 0 2px;
    background: #2b2b2b;
}

/* top rows */
.topbar {
    display: flex;
    justify-content: space-between;
    height: 17px;
}

.main-menu {
    width: 695px;
    padding: 1px 0 0 6px;
}

.main-menu button {
    height: 11px;
}

.workspace {
    display: flex;
    align-items: center;
    gap: 4px;
    padding-right: 2px;
    color: #bbb;
}

.workspace .drop {
    width: 127px;
}

.workspace .tools {
    color: #c8c8c8;
}

.status {
    display: flex;
    align-items: center;
    height: 21px;
    border-bottom: 2px solid #383838;
}

.status .mode {
    width: 66px;
}

.status .live {
    width: 64px;
}

.status .sym {
    width: 66px;
}

.status-right {
    display: flex;
    align-items: center;
}

.status-right .sep {
    margin: 0 7px;
}

.user {
    display: flex;
    align-items: center;
    gap: 4px;
    width: 79px;
    height: 14px;
    padding-left: 3px;
    background: #5a5a5a;
    color: #eee;
    font: 8px/10px "Liberation Sans", Arial, sans-serif;
}

.user svg {
    width: 10px;
    height: 11px;
}

.user .tri {
    margin-left: auto;
}

.status .panels {
    margin-left: auto;
}

.shelf {
    display: flex;
    height: 46px;
    padding-top: 1px;
    border-bottom: 1px solid #333;
}

.shelf-side {
    display: flex;
    flex-direction: column;
    align-items: center;
    justify-content: space-between;
    width: 13px;
    margin: 0 2px 3px 1px;
    padding: 9px 0 8px;
    background: #373737;
}

.shelf-side i {
    width: 7px;
    height: 3px;
    background: #888;
}

.shelf-side svg {
    width: 8px;
    height: 8px;
}

.shelf-main {
    flex: 1;
}

.shelf-tabs {
    display: flex;
    height: 13px;
    padding-right: 497px;
    background: #373737;
    color: #a2a2a2;
}

.shelf-tabs button {
    flex: auto;
    padding-top: 1px;
    border-right: 1px solid #303030;
}

.shelf-tabs .on {
    background: #444;
    color: #fff;
}

.shelf-items {
    display: flex;
    padding: 4px 0 0 3px;
}

.shelf-items button {
    width: 23px;
    height: 23px;
    display: flex;
    flex-direction: column;
    align-items: center;
}

.shelf-items svg {
    width: 14px;
    height: 12px;
}

.shelf-items span {
    width: 20px;
    background: #1c1c1c;
    color: #f4f4f4;
    font-size: 6px;
    line-height: 8px;
}

.shelf-items .green span {
    color: #2cff4c;
}

.shelf-scroll {
    display: flex;
    flex-direction: column;
    align-items: center;
    gap: 1px;
    width: 8px;
    margin: 14px 3px 6px 0;
    background: #373737;
    font-size: 6px;
    line-height: 7px;
}

.shelf-scroll i {
    width: 6px;
    height: 6px;
    border-radius: 3px;
    background: #666;
}

/* main */
.main {
    flex: 1;
    display: flex;
    min-height: 0;
}

.toolbox {
    display: flex;
    flex-direction: column;
    align-items: center;
    width: 28px;
    padding: 2px 0 5px;
}

.handle {
    width: 26px;
    height: 3px;
    margin-bottom: 2px;
    border: solid #5a5a5a;
    border-width: 1px 0;
}

.big {
    flex-direction: column;
    gap: 1px;
    width: 24px;
}

.big .tool {
    flex: none;
    height: 24px;
}

.big .tool svg {
    width: 22px;
    height: 22px;
}

.toolbox hr {
    width: 24px;
    height: 2px;
    margin: 50px 0 4px;
    border: none;
    background: #777;
}

.logo {
    width: 22px;
    height: 20px;
    margin-top: auto;
}

.outliner {
    display: flex;
    flex-direction: column;
    width: 175px;
    margin: 0 0 2px 3px;
}

.out-tab {
    width: 43px;
    height: 12px;
    padding-left: 7px;
    background: #4a4a4a;
    color: #eee;
    font-size: 7px;
    font-weight: 600;
    line-height: 13px;
}

.out-box {
    flex: 1;
    display: flex;
    flex-direction: column;
    min-height: 0;
    border: 1px solid #757575;
}

.out-menu {
    width: 85px;
    height: 16px;
    padding: 0 0 4px 5px;
    color: #e8e8e8;
}

.out-search {
    display: flex;
    align-items: center;
    gap: 4px;
    padding-left: 3px;
}

.out-search svg {
    width: 12px;
    height: 12px;
}

.out-search .drop {
    flex: 1;
    background: #2b2b2b;
}

.out-search input::placeholder {
    color: #a8a8a8;
}

.out-body {
    flex: 1;
    display: flex;
    min-height: 0;
    background: #373737;
}

.out-body ul {
    flex: 1;
    display: flex;
    flex-direction: column;
    padding: 1px 0 14px;
}

.out-body li {
    flex: 1;
    display: flex;
    align-items: center;
    gap: 3px;
    min-height: 0;
    padding-left: 24px;
    color: #dcdcdc;
}

.out-body li svg {
    width: 10px;
    height: 10px;
}

.out-body li.off {
    color: #747474;
}

.out-body li.off svg {
    color: #c8c8c8;
}

.out-body li.on {
    background: #5285a6;
    color: #fff;
}

.out-body li.group {
    padding-left: 14px;
}

.out-body li.group::before {
    content: "+";
    width: 7px;
    height: 7px;
    border: 1px solid #888;
    color: #aaa;
    font-size: 6px;
    line-height: 4px;
    text-align: center;
}

.vscroll {
    display: flex;
    flex-direction: column;
    align-items: center;
    width: 10px;
    font-size: 6px;
    line-height: 8px;
}

.vscroll i {
    flex: 1;
    width: 6px;
    border-radius: 3px;
    background: #5d5d5d;
}

.hscroll {
    display: flex;
    align-items: center;
    gap: 2px;
    height: 16px;
    padding: 0 11px 1px 2px;
    background: #373737;
    font-size: 6px;
}

.hscroll i {
    flex: 1;
    height: 7px;
    border-radius: 3px;
    background: #5d5d5d;
}

.viewport {
    flex: 1;
    display: flex;
    flex-direction: column;
    min-width: 0;
    margin: 3px 4px 5px 5px;
}

.view-menu {
    width: 201px;
    height: 11px;
    padding-left: 4px;
}

.view-tools {
    display: flex;
    align-items: center;
    height: 14px;
}

.view-tools .sep {
    height: 9px;
    margin: 0 2px;
}

.view-tools .tools {
    width: 13px;
}

.view-tools .tools-7 { width: 90px; }
.view-tools .tools-4 { width: 51px; }
.view-tools .tools-3 { width: 39px; }

.view-tools .tool {
    height: 13px;
}

.view-tools .tool svg {
    width: 10px;
    height: 10px;
}

.view-tools .num {
    margin: 0 3px 0 2px;
}

.gamma {
    width: 110px;
}

.scene {
    position: relative;
    flex: 1;
    min-height: 0;
    background: #5c5c5c;
    overflow: hidden;
}

.scene-art {
    position: absolute;
    width: 742px;
    height: 511px;
}

.axis {
    font: bold 7px "Liberation Sans", Arial, sans-serif;
}

.hud {
    position: relative;
    display: flex;
    flex-direction: column;
    justify-content: space-between;
    height: 104px;
    padding: 1px 0 0 10px;
    color: #fff;
    font: 7px/9px "Liberation Sans", Arial, sans-serif;
}

.hud div {
    display: grid;
    grid-template-columns: 34px 43px 43px 43px;
    text-align: right;
}

.hud .bifrost {
    grid-template-columns: 67px 43px 43px;
}

.hud b:first-child {
    text-align: left;
}

.attrs {
    display: flex;
    flex-direction: column;
    width: 308px;
    padding: 2px 0 4px 6px;
    border-left: 1px solid #333;
}

.attr-menu {
    width: 181px;
    height: 11px;
    padding-left: 2px;
}

.attr-tabs {
    display: flex;
    height: 12px;
    margin: 12px 3px 0 0;
    background: #373737;
    color: #a2a2a2;
}

.attr-tabs button {
    padding: 0 8px;
    border-right: 1px solid #303030;
}

.attr-tabs .on {
    background: #444;
    color: #fff;
}

.attr-head {
    display: flex;
    align-items: center;
    justify-content: flex-end;
    gap: 10px;
    padding: 6px 23px 11px 0;
}

.attr-head input {
    width: 92px;
    height: 14px;
    padding-left: 2px;
    background: #2b2b2b;
    color: #e4e4e4;
}

.attr-io {
    display: grid;
    gap: 5px;
}

.attr-io svg {
    width: 11px;
    height: 10px;
}

.attr-btns {
    display: grid;
    grid-template-columns: 1fr 1fr;
    gap: 2px;
    width: 48px;
}

.attr-btns button,
.attr-foot button,
.row button {
    height: 13px;
    background: #5d5d5d;
    color: #fff;
}

.attr-btns .wide {
    grid-column: span 2;
}

.attr-btns button:disabled {
    background: #4c4c4c;
    color: #7c7c7c;
}

.rolls {
    display: grid;
    grid-template-rows: repeat(12, 1fr);
    gap: 1px;
    height: 175px;
    margin-right: 6px;
    background: #3e3e3e;
}

.rolls div {
    background: #5d5d5d;
}

.notes {
    height: 67px;
    margin: auto 3px 2px 0;
    background: #2b2b2b;
    resize: none;
}

.attr-foot {
    display: grid;
    grid-template-columns: 1fr 1fr 1fr;
    gap: 2px;
}

.attr-foot button {
    height: 18px;
}

.side-tabs {
    display: flex;
    flex-direction: column;
    width: 11px;
    padding: 1px 0 4px 1px;
    background: #373737;
}

.side-tabs button {
    padding: 9px 0;
    background: #3c3c3c;
    border-bottom: 1px solid #303030;
    color: #a2a2a2;
    writing-mode: vertical-rl;
    line-height: 10px;
}

.side-tabs .on {
    background: #444;
    color: #eee;
    font-weight: 600;
}

/* bottom rows */
.timeline {
    display: flex;
    align-items: center;
    height: 27px;
    border-top: 1px solid #3a3a3a;
    border-bottom: 1px solid #383838;
}

.time-bed {
    flex: 1;
    height: 21px;
    padding: 0 7px 0 5px;
    background: #2b2b2b;
}

.ticks {
    position: relative;
    display: flex;
    height: 21px;
    border-bottom: 1px solid #5285a6;
    color: #8c8c8c;
}

.ticks span {
    flex: 1;
    padding-left: 1px;
    line-height: 8px;
    background: linear-gradient(#999, #999) 0 9px / 1px 10px no-repeat;
}

.ticks b {
    position: absolute;
    width: 6px;
    height: 20px;
    padding-top: 9px;
    background: #666;
    color: #fff;
    font-weight: 400;
    text-indent: -1px;
}

.frame {
    width: 65px;
    height: 13px;
    padding-left: 12px;
    background: #2b2b2b;
}

.tools-8p {
    width: 123px;
    margin: 0 4px 0 5px;
}

.range {
    display: flex;
    align-items: center;
    height: 24px;
    border-bottom: 1px solid #3a3a3a;
}

.range .field {
    width: 59px;
    height: 17px;
    margin-right: 5px;
    background: #2b2b2b;
}

.range-bed {
    width: 404px;
    padding: 2px;
    background: #373737;
}

.range-bar {
    display: flex;
    align-items: center;
    gap: 2px;
    height: 13px;
    padding: 0 2px;
    border-radius: 2px;
    background: #5d5d5d;
}

.range-bar i {
    width: 10px;
    height: 10px;
    border-radius: 2px;
    background: #999;
}

.range-bar .end {
    margin-left: auto;
}

.grow {
    flex: 1;
}

.fps {
    width: 64px;
}

.range-tools {
    display: flex;
    align-items: center;
    padding: 0 5px;
}

.range-tools .tools {
    width: 19px;
}

.range-tools .sep {
    margin: 0 3px;
}

.range-tools .tool svg {
    width: 15px;
    height: 15px;
}

.command {
    display: flex;
    align-items: center;
    height: 23px;
    border-bottom: 1px solid #383838;
}

.command label {
    width: 31px;
    padding-left: 8px;
    color: #eee;
}

.command .mel {
    width: 442px;
    height: 15px;
    background: #2b2b2b;
}

.command .result {
    flex: 1;
    height: 15px;
    margin: 0 2px 0 5px;
    background: #2b2b2b;
}

.command .tools {
    width: 20px;
}

.help {
    display: flex;
    align-items: center;
    gap: 8px;
    height: 15px;
    color: #bbb;
    font-size: 6px;
}

/* floating windows */
.exporter,
.uv {
    position: absolute;
    background: #444;
    box-shadow: 0 1px 5px rgba(0, 0, 0, 0.5);
}

.exporter {
    left: 376px;
    top: 146px;
    width: 384px;
}

.exp-title {
    display: flex;
    align-items: center;
    gap: 5px;
    height: 20px;
    padding-left: 5px;
    background: #fff;
    color: #888;
    font-size: 8px;
}

.exp-title svg,
.uv-name svg {
    width: 9px;
    height: 9px;
}

.exp-body {
    display: flex;
    flex-direction: column;
    padding: 3px 2px 2px 3px;
}

.yellow {
    height: 16px;
    background: #e2e380;
    color: #222;
}

.explore {
    width: 211px;
}

.path {
    height: 13px;
    margin-top: 2px;
    padding-left: 1px;
    background: #2b2b2b;
    color: #ddd;
}

.exp-modes {
    display: grid;
    grid-template-columns: 139px 98px;
    gap: 2px;
    margin-top: 4px;
    padding: 0 0 2px;
    border-bottom: 1px solid #333;
}

.exp-modes button {
    height: 16px;
    background: #7fe57f;
    color: #102810;
}

.exp-cols {
    display: grid;
    grid-template-columns: 139px 1fr;
    gap: 2px;
    margin-top: 3px;
    padding-bottom: 1px;
    border-bottom: 1px solid #333;
}

.exp-cols h3 {
    height: 13px;
    padding-left: 4px;
    background: #5a5a5a;
    color: #d0d0d0;
    font-size: 7px;
    font-weight: 600;
    line-height: 13px;
}

.list {
    height: 78px;
    margin: 1px 0 2px;
    padding: 1px;
    background: #2b2b2b;
    line-height: 9px;
}

.list.tall {
    height: 265px;
}

.list ul {
    display: flex;
    flex-direction: column;
    height: 199px;
}

.list li {
    flex: 1;
    padding-left: 1px;
    min-height: 0;
    color: #e0e0e0;
}

.list li.on {
    background: #4b62a0;
    color: #fff;
}

.list p.dim {
    color: #747474;
}

.list p.shade {
    background: #5d5d5d;
    color: #fff;
}

.list p.set {
    background: #4f7f50;
    color: #f4f4f4;
}

.row {
    display: flex;
    gap: 2px;
    margin-bottom: 1px;
}

.row button {
    flex: 1;
    height: 16px;
}

.row .red {
    background: #e66464;
    color: #511;
}

.progress {
    height: 13px;
    margin: 2px 0 3px;
    background: #2b2b2b;
}

.progress i {
    display: block;
    width: 3px;
    height: 12px;
    background: #5285a6;
}

.uv {
    left: 565px;
    top: 126px;
    width: 531px;
    border: 1px solid #3a3a3a;
    border-top: none;
}

.uv-title {
    display: flex;
    align-items: center;
    height: 21px;
    background: #fff;
    color: #888;
}

.uv-name {
    flex: 1;
    display: flex;
    align-items: center;
    gap: 5px;
    padding-left: 5px;
    font-size: 8px;
}

.uv-title button {
    display: flex;
    justify-content: center;
    width: 30px;
}

.uv-title button svg {
    width: 8px;
    height: 8px;
    fill: none;
    stroke: #888;
    stroke-width: 1;
}

.uv-menu {
    width: 338px;
    height: 17px;
    padding: 0 0 1px 6px;
    color: #ececec;
}

.uv-tools {
    display: flex;
    align-items: center;
    height: 20px;
    padding: 0 0 1px 4px;
}

.uv-tools .tools {
    margin-right: 3px;
}

.uv-tools .photo {
    width: 34px;
    margin: 0;
}

.uv-tools .tools-5 {
    margin: 0;
}

.uv-tools .sep {
    margin: 0 3px;
}

.uv-tools .num {
    width: 38px;
    height: 13px;
}

.uv-tools .num + .tools {
    margin: 0 1px 0 2px;
}

.uv-tools .gamma {
    width: 108px;
    margin-left: 1px;
}

.dimmer {
    width: 35px;
    height: 10px;
    background: linear-gradient(#222, #222) 0 4px / 100% 2px no-repeat;
}

.dimmer::-webkit-slider-thumb {
    appearance: none;
    width: 5px;
    height: 9px;
    background: #c8c8c8;
}

.uv-canvas {
    width: 525px;
    height: 500px;
    margin: 0 2px 3px;
    background: #5c5c5c;
    shape-rendering: crispEdges;
}

.uv-canvas text {
    fill: #333;
    font: 7px "Liberation Sans", Arial, sans-serif;
}

.uv-canvas .shell {
    fill: none;
    stroke: #f4f4ff;
    stroke-width: 1.5px;
    shape-rendering: auto;
}

.uv-canvas .stat {
    fill: #fff;
    font-weight: 700;
}

.toast {
    position: absolute;
    left: 491px;
    top: 120px;
    padding: 5px 6px;
    width: 187px;
    height: 39px;
    background: rgba(100, 100, 100, 0.7);
    color: #bcbcbc;
    font: bold 11px/14px "Liberation Sans", Arial, sans-serif;
    white-space: nowrap;
}

.toast b {
    color: #e6e62a;
}

.cursor {
    position: absolute;
    left: 941px;
    top: 398px;
    width: 8px;
    height: 14px;
}
```
